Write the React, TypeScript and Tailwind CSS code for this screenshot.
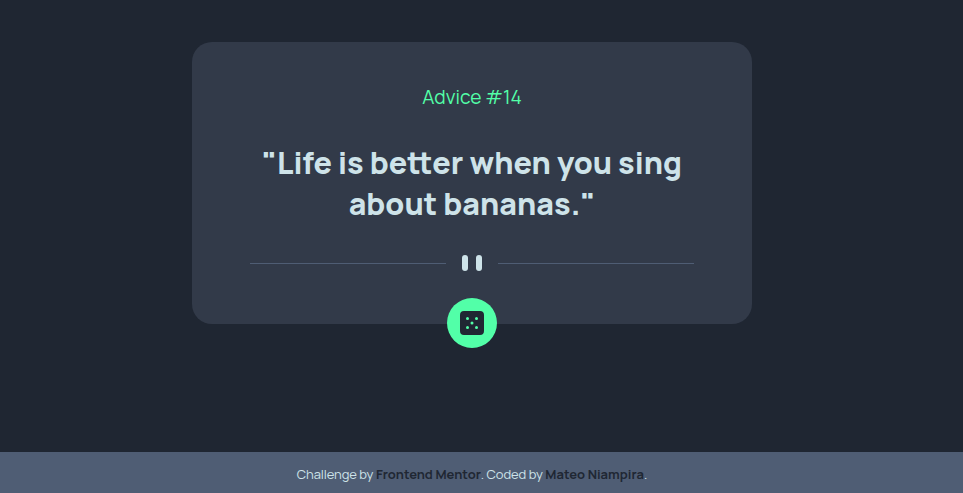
export default function App() {
  return (
    <div className="flex h-[493px] flex-col overflow-hidden bg-[#1f2632] font-['Manrope',Inter,sans-serif]">
      <main className="flex flex-1 flex-col items-center pt-[42px] pr-[19px]">
        <section className="flex h-[282px] w-[560px] flex-col items-center rounded-[20px] bg-[#323a49] px-[58px] pt-[42px] text-center">
          <h1 className="shrink-0 text-[19.2px] leading-[26px] whitespace-nowrap text-[#52ffa8]">Advice #14</h1>
          <p className="mt-[32px] h-[90px] shrink-0 text-[30.4px] leading-[41px] font-extrabold whitespace-nowrap text-[#cee3e9]">
            "Life is better when you sing
            <br />
            about bananas."
          </p>
          <svg width="444" height="16" viewBox="0 0 444 16" className="mt-[23px] shrink-0" fill="none">
            <path fill="#4f5d74" d="M0 8h196v1H0zM248 8h196v1H248z" />
            <g transform="translate(212)" fill="#cee3e9">
              <rect width="6" height="16" rx="3" />
              <rect x="14" width="6" height="16" rx="3" />
            </g>
          </svg>
          <button className="mt-[27px] flex size-[50px] shrink-0 items-center justify-center rounded-full bg-[#52ffa8]">
            <svg width="24" height="24" viewBox="0 0 24 24">
              <path
                d="M20 0H4a4.005 4.005 0 0 0-4 4v16a4.005 4.005 0 0 0 4 4h16a4.005 4.005 0 0 0 4-4V4a4.005 4.005 0 0 0-4-4ZM7.5 18a1.5 1.5 0 1 1 0-3 1.5 1.5 0 0 1 0 3Zm0-9a1.5 1.5 0 1 1 0-3 1.5 1.5 0 0 1 0 3Zm4.5 4.5a1.5 1.5 0 1 1 0-3 1.5 1.5 0 0 1 0 3Zm4.5 4.5a1.5 1.5 0 1 1 0-3 1.5 1.5 0 0 1 0 3Zm0-9a1.5 1.5 0 1 1 0-3 1.5 1.5 0 0 1 0 3Z"
                fill="#202733"
              />
            </svg>
          </button>
        </section>
      </main>
      <footer className="flex h-[41px] items-center justify-center bg-[#4f5d74] pt-[4px] pr-[19px] text-[13px] tracking-[-0.08px] whitespace-nowrap text-[#cee3e9]">
        <p>
          Challenge by <a className="font-bold tracking-normal text-[#202733]">Frontend Mentor</a>. Coded by{" "}
          <a className="font-bold tracking-normal text-[#202733]">Mateo Niampira</a>.
        </p>
      </footer>
    </div>
  );
}
